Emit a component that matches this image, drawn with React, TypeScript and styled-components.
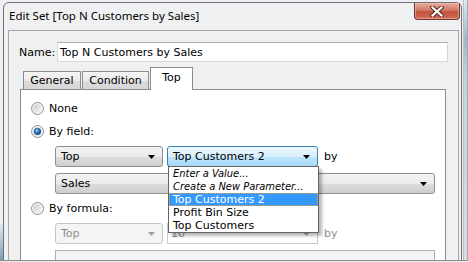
import React, { useId } from "react";
import styled, { createGlobalStyle } from "styled-components";

const UI = `"DejaVu Sans", "Liberation Sans", sans-serif`;
const UI_NARROW = `"DejaVu Sans Condensed", "DejaVu Sans", sans-serif`;
const TITLE = `"Noto Sans", "Open Sans", sans-serif`;

const Global = createGlobalStyle`
  html, body { margin: 0; padding: 0; }
  body { background: #e9ebee; font-family: ${UI}; font-size: 11px; color: #000; }
  #root { width: 468px; height: 262px; }
`;

const Page = styled.div`
  width: 467px;
  height: 260px;
  border-bottom: 1px solid #8d8d8d;
  border-right: 1px solid #a9a9a9;
  overflow: hidden;
  display: flex;
  align-items: flex-start;
  background: #eceef1;
`;

const LeftStrip = styled.div`
  width: 3px;
  height: 100%;
  flex: none;
  background: linear-gradient(#eef0f2 0%, #eef0f2 85%, #7b9cb5 100%);
`;

const Window = styled.div`
  margin-top: 2px;
  width: 457px;
  height: 300px;
  flex: none;
  border: 1px solid #6e7277;
  border-radius: 6px 6px 0 0;
  background: #eff0f1;
  display: flex;
  flex-direction: column;
`;

const RightStrip = styled.div`
  margin-left: 1px;
  width: 4px;
  height: 100%;
  flex: none;
  border-left: 1px solid #b9bcc0;
  background: linear-gradient(#dfe8f2 0%, #9fb6cc 15%, #c5d2de 30%, #d8dde2 100%);
`;

const TitleBar = styled.div`
  height: 27px;
  display: flex;
  align-items: flex-start;
  flex: none;
`;

const Title = styled.div`
  font-family: ${TITLE};
  font-size: 11.5px;
  line-height: 16px;
  padding: 5px 0 0 5px;
  color: #000;
  white-space: nowrap;
`;

const CloseButton = styled.div`
  margin-left: auto;
  margin-right: 1px;
  width: 44px;
  height: 16px;
  border: 1px solid #6d3a33;
  border-top: none;
  border-radius: 0 0 4px 4px;
  background: linear-gradient(#e9a99b 0%, #d27a68 45%, #c4503a 55%, #d0705a 100%);
  box-shadow: inset 0 0 0 1px rgba(255, 200, 190, 0.45);
  display: flex;
  align-items: center;
  justify-content: center;
`;

const ContentPanel = styled.div`
  margin: 0 2px 0 4px;
  flex: 1;
  border: 1px solid #a4a8ad;
  background: #f0f0f0;
  padding: 11px 0 0 10px;
  display: flex;
  flex-direction: column;
`;

const NameRow = styled.div`
  display: flex;
  align-items: center;
  height: 20px;
`;

const Label = styled.span`
  width: 38px;
  flex: none;
`;

const TextInput = styled.div`
  width: 387px;
  height: 18px;
  border: 1px solid #d5d9de;
  border-top-color: #abadb3;
  background: #fff;
  display: flex;
  align-items: center;
  padding-left: 2px;
  box-sizing: content-box;
  white-space: nowrap;
`;

const TabArea = styled.div`
  margin: 5px 0 0 1px;
  width: 426px;
  display: flex;
  flex-direction: column;
`;

const TabRow = styled.div`
  display: flex;
  align-items: flex-end;
  height: 23px;
  padding-left: 3px;
  margin-bottom: -1px;
`;

const Tab = styled.div<{ $active?: boolean; $w: number }>`
  box-sizing: border-box;
  width: ${(p) => p.$w}px;
  height: ${(p) => (p.$active ? 23 : 19)}px;
  margin-right: ${(p) => (p.$active ? 0 : 1)}px;
  border: 1px solid #898c95;
  border-bottom: ${(p) => (p.$active ? "none" : "1px solid #898c95")};
  background: ${(p) =>
    p.$active ? "#ffffff" : "linear-gradient(#f4f4f4 0%, #ebebeb 50%, #dddddd 51%, #d6d6d6 100%)"};
  display: flex;
  align-items: center;
  justify-content: center;
  padding-bottom: ${(p) => (p.$active ? 3 : 0)}px;
  position: relative;
  z-index: ${(p) => (p.$active ? 2 : 0)};
`;

const TabPanel = styled.div`
  border: 1px solid #898c95;
  background: #fff;
  height: 220px;
  padding: 12px 0 0 10px;
  display: flex;
  flex-direction: column;
  position: relative;
  z-index: 1;
`;

const RadioRow = styled.div<{ $mt: number }>`
  display: flex;
  align-items: center;
  height: 13px;
  margin-top: ${(p) => p.$mt}px;
  gap: 5px;
`;

const FieldRow = styled.div<{ $mt: number }>`
  display: flex;
  align-items: center;
  margin-left: 24px;
  margin-top: ${(p) => p.$mt}px;
`;

const Combo = styled.div<{ $w: number; $focus?: boolean; $disabled?: boolean; $ml?: number }>`
  box-sizing: border-box;
  position: relative;
  width: ${(p) => p.$w}px;
  height: 21px;
  margin-left: ${(p) => p.$ml ?? 0}px;
  border: 1px solid ${(p) => (p.$focus ? "#3c7fb1" : p.$disabled ? "#c4c7ca" : "#8e8f8f")};
  border-radius: 3px;
  background: ${(p) =>
    p.$focus
      ? "linear-gradient(#eaf6fd 0%, #d9f0fc 50%, #bee6fd 51%, #a7d9f5 100%)"
      : p.$disabled
      ? "#f4f4f4"
      : "linear-gradient(#f2f2f2 0%, #ebebeb 50%, #dddddd 51%, #cfcfcf 100%)"};
  color: ${(p) => (p.$disabled ? "#8d8d8d" : "#000")};
  display: flex;
  align-items: center;
  padding: 0 7px 0 5px;
`;

const ComboText = styled.span`
  flex: 1;
  white-space: nowrap;
`;

const EditCombo = styled(Combo)`
  border-radius: 0;
  background: #fff;
  border-color: #c9cbce;
  padding-left: 3px;
`;

const ByText = styled.span<{ $disabled?: boolean }>`
  margin-left: 6px;
  color: ${(p) => (p.$disabled ? "#8d8d8d" : "#000")};
`;

const ListBox = styled.div`
  position: absolute;
  left: 0px;
  top: 19px;
  width: 151px;
  box-sizing: border-box;
  border: 1px solid #646464;
  background: #fff;
  box-shadow: 3px 3px 3px rgba(0, 0, 0, 0.28);
  z-index: 10;
  color: #000;
`;

const ListItem = styled.div<{ $italic?: boolean; $selected?: boolean }>`
  box-sizing: border-box;
  height: 13px;
  line-height: 11px;
  padding-left: 3px;
  font-family: ${(p) => (p.$italic ? UI_NARROW : UI)};
  font-style: ${(p) => (p.$italic ? "italic" : "normal")};
  white-space: nowrap;
  background: ${(p) => (p.$selected ? "#3399ff" : "transparent")};
  color: ${(p) => (p.$selected ? "#fff" : "#000")};
  border: 1px ${(p) => (p.$selected ? "dotted #f59c2d" : "solid transparent")};
`;

const BigBox = styled.div`
  margin: 6px 0 0 24px;
  width: 380px;
  height: 40px;
  box-sizing: border-box;
  border: 1px solid #adb2b5;
  background: #f4f4f4;
`;

function Radio({ checked }: { checked?: boolean }) {
  const id = useId().replace(/:/g, "");
  return (
    <svg width="13" height="13" viewBox="0 0 13 13">
      <defs>
        <linearGradient id={`f${id}`} x1="0" y1="0" x2="1" y2="1">
          <stop offset="0" stopColor="#c9c9c9" />
          <stop offset="1" stopColor="#fafafa" />
        </linearGradient>
        <radialGradient id={`d${id}`} cx="0.4" cy="0.35" r="0.7">
          <stop offset="0" stopColor="#9fd4ff" />
          <stop offset="0.5" stopColor="#2b74c4" />
          <stop offset="1" stopColor="#0b3a73" />
        </radialGradient>
      </defs>
      <circle cx="6.5" cy="6.5" r="6" fill="#f4f4f4" stroke="#8f8f8f" />
      <circle cx="6.5" cy="6.5" r="4.3" fill={`url(#f${id})`} />
      {checked && <circle cx="6.5" cy="6.5" r="3.3" fill={`url(#d${id})`} stroke="#1c4f88" strokeWidth="0.6" />}
    </svg>
  );
}

function Arrow({ disabled }: { disabled?: boolean }) {
  return (
    <svg width="7" height="4" viewBox="0 0 7 4">
      <polygon points="0,0 7,0 3.5,4" fill={disabled ? "#a0a0a0" : "#000"} />
    </svg>
  );
}

function CloseX() {
  return (
    <svg width="14" height="11" viewBox="0 0 14 11">
      <path d="M2.5 1.5 L11.5 9.5 M11.5 1.5 L2.5 9.5" stroke="#4d2a26" strokeWidth="4.2" strokeLinecap="square" />
      <path d="M2.5 1.5 L11.5 9.5 M11.5 1.5 L2.5 9.5" stroke="#ffffff" strokeWidth="2.2" strokeLinecap="square" />
    </svg>
  );
}

export default function App() {
  return (
    <>
      <Global />
      <Page>
        <LeftStrip />
        <Window>
          <TitleBar>
            <Title>Edit Set [Top N Customers by Sales]</Title>
            <CloseButton>
              <CloseX />
            </CloseButton>
          </TitleBar>
          <ContentPanel>
            <NameRow>
              <Label>Name:</Label>
              <TextInput>Top N Customers by Sales</TextInput>
            </NameRow>
            <TabArea>
              <TabRow>
                <Tab $w={58}>General</Tab>
                <Tab $w={67}>Condition</Tab>
                <Tab $w={43} $active>
                  Top
                </Tab>
              </TabRow>
              <TabPanel>
                <RadioRow $mt={0}>
                  <Radio />
                  <span>None</span>
                </RadioRow>
                <RadioRow $mt={10}>
                  <Radio checked />
                  <span>By field:</span>
                </RadioRow>
                <FieldRow $mt={8}>
                  <Combo $w={108}>
                    <ComboText>Top</ComboText>
                    <Arrow />
                  </Combo>
                  <Combo $w={151} $ml={4} $focus>
                    <ComboText>Top Customers 2</ComboText>
                    <Arrow />
                    <ListBox>
                      <ListItem $italic>Enter a Value...</ListItem>
                      <ListItem $italic>Create a New Parameter...</ListItem>
                      <ListItem $selected>Top Customers 2</ListItem>
                      <ListItem>Profit Bin Size</ListItem>
                      <ListItem>Top Customers</ListItem>
                    </ListBox>
                  </Combo>
                  <ByText>by</ByText>
                </FieldRow>
                <FieldRow $mt={6}>
                  <Combo $w={380}>
                    <ComboText>Sales</ComboText>
                    <Arrow />
                  </Combo>
                </FieldRow>
                <RadioRow $mt={8}>
                  <Radio />
                  <span>By formula:</span>
                </RadioRow>
                <FieldRow $mt={8}>
                  <Combo $w={108} $disabled>
                    <ComboText>Top</ComboText>
                    <Arrow disabled />
                  </Combo>
                  <EditCombo $w={151} $ml={4} $disabled>
                    <ComboText>10</ComboText>
                    <Arrow disabled />
                  </EditCombo>
                  <ByText $disabled>by</ByText>
                </FieldRow>
                <BigBox />
              </TabPanel>
            </TabArea>
          </ContentPanel>
        </Window>
        <RightStrip />
      </Page>
    </>
  );
}
